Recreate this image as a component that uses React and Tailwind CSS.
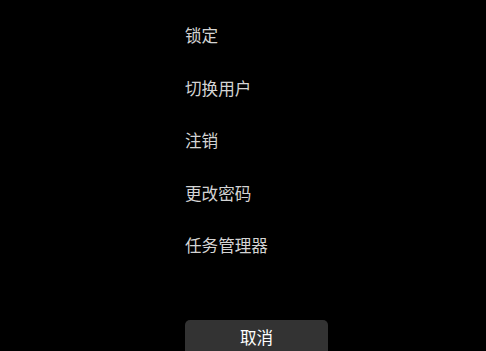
export default function App() {
  const items = ["锁定", "切换用户", "注销", "更改密码", "任务管理器"];
  return (
    <div
      className="w-[486px] h-[351px] bg-black overflow-hidden pl-[185px] pt-[23px]"
      style={{ fontFamily: '"Noto Sans CJK SC", "Noto Sans", sans-serif' }}
    >
      <div className="flex flex-col gap-[28.6px]">
        {items.map((t) => (
          <div key={t} className="text-[16.6px] leading-[24px] text-[#d4d4d4]">
            {t}
          </div>
        ))}
      </div>
      <div className="mt-[63px] w-[143px] h-[36px] rounded-[5px] bg-[#333333] flex items-center justify-center text-[16.6px] text-white pb-[2px]">
        取消
      </div>
    </div>
  );
}
